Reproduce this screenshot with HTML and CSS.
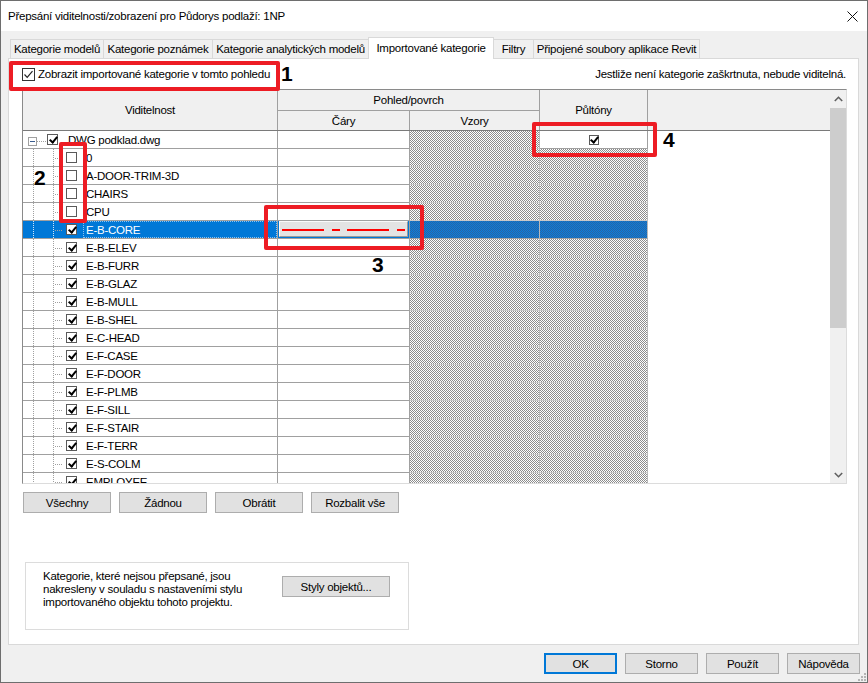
FILE: index.html
```html
<!DOCTYPE html>
<html lang="cs">
<head>
  <meta charset="UTF-8" />
  <title>Přepsání viditelnosti/zobrazení</title>
  <link rel="stylesheet" href="styles.css">
</head>
<body>

<div class="dialog">
  <div class="titlebar">
    <span class="title">Přepsání viditelnosti/zobrazení pro Půdorys podlaží: 1NP</span>
    <svg class="close" width="11" height="11" viewBox="0 0 11 11"><path d="M0.5 0.5L10.5 10.5M10.5 0.5L0.5 10.5" stroke="#111" stroke-width="1"/></svg>
  </div>

  <div class="main">
    <div class="tabs">
      <div class="tab t1">Kategorie modelů</div>
      <div class="tab t2">Kategorie poznámek</div>
      <div class="tab t3">Kategorie analytických modelů</div>
      <div class="tab t4 active">Importované kategorie</div>
      <div class="tab t5">Filtry</div>
      <div class="tab t6">Připojené soubory aplikace Revit</div>
    </div>

    <div class="panel">
      <div class="toprow">
        <label class="showcb">
          <span class="bigcb"><svg width="11" height="11" viewBox="0 0 11 11"><polyline points="1.5,5.5 4.2,8.3 9.5,2.2" fill="none" stroke="#222" stroke-width="1.2"/></svg></span>
          Zobrazit importované kategorie v tomto pohledu
        </label>
        <span class="hint">Jestliže není kategorie zaškrtnuta, nebude viditelná.</span>
      </div>

      <div class="grid">
        <div class="gridmain">
          <div class="ghead">
            <div class="hc c1">Viditelnost</div>
            <div class="hgroup">
              <div class="hgtitle">Pohled/povrch</div>
              <div class="hgsub">
                <div class="hc c2">Čáry</div>
                <div class="hc c3">Vzory</div>
              </div>
            </div>
            <div class="hc c4">Půltóny</div>
            <div class="hc c5"></div>
          </div>

          <div class="gbody">
            <div class="row root">
              <div class="cell c1"><span class="exp"></span><span class="hdots"></span><span class="cb on"></span><span class="lbl">DWG podklad.dwg</span></div>
              <div class="cell c2"></div>
              <div class="cell c3 hatch"></div>
              <div class="cell c4 center"><span class="cb small on"></span></div>
              <div class="cell c5"></div>
            </div>
            <div class="row">
              <div class="cell c1"><span class="g1"></span><span class="g2"></span><span class="g3"></span><span class="cb"></span><span class="lbl">0</span></div>
              <div class="cell c2"></div><div class="cell c3 hatch"></div><div class="cell c4 hatch"></div><div class="cell c5"></div>
            </div>
            <div class="row">
              <div class="cell c1"><span class="g1"></span><span class="g2"></span><span class="g3"></span><span class="cb"></span><span class="lbl">A-DOOR-TRIM-3D</span></div>
              <div class="cell c2"></div><div class="cell c3 hatch"></div><div class="cell c4 hatch"></div><div class="cell c5"></div>
            </div>
            <div class="row">
              <div class="cell c1"><span class="g1"></span><span class="g2"></span><span class="g3"></span><span class="cb"></span><span class="lbl">CHAIRS</span></div>
              <div class="cell c2"></div><div class="cell c3 hatch"></div><div class="cell c4 hatch"></div><div class="cell c5"></div>
            </div>
            <div class="row">
              <div class="cell c1"><span class="g1"></span><span class="g2"></span><span class="g3"></span><span class="cb"></span><span class="lbl">CPU</span></div>
              <div class="cell c2"></div><div class="cell c3 hatch"></div><div class="cell c4 hatch"></div><div class="cell c5"></div>
            </div>
            <div class="row sel">
              <div class="cell c1"><span class="g1"></span><span class="g2"></span><span class="g3"></span><span class="cb on"></span><span class="lbl">E-B-CORE</span></div>
              <div class="cell c2">
                <div class="linebtn"><svg width="125" height="2" viewBox="0 0 125 2"><line x1="0" y1="1" x2="125" y2="1" stroke="#ff0000" stroke-width="2" stroke-dasharray="42 8 8 7"/></svg></div>
              </div>
              <div class="cell c3 hatch"></div><div class="cell c4 hatch"></div><div class="cell c5"></div>
            </div>
            <div class="row">
              <div class="cell c1"><span class="g1"></span><span class="g2"></span><span class="g3"></span><span class="cb on"></span><span class="lbl">E-B-ELEV</span></div>
              <div class="cell c2"></div><div class="cell c3 hatch"></div><div class="cell c4 hatch"></div><div class="cell c5"></div>
            </div>
            <div class="row">
              <div class="cell c1"><span class="g1"></span><span class="g2"></span><span class="g3"></span><span class="cb on"></span><span class="lbl">E-B-FURR</span></div>
              <div class="cell c2"></div><div class="cell c3 hatch"></div><div class="cell c4 hatch"></div><div class="cell c5"></div>
            </div>
            <div class="row">
              <div class="cell c1"><span class="g1"></span><span class="g2"></span><span class="g3"></span><span class="cb on"></span><span class="lbl">E-B-GLAZ</span></div>
              <div class="cell c2"></div><div class="cell c3 hatch"></div><div class="cell c4 hatch"></div><div class="cell c5"></div>
            </div>
            <div class="row">
              <div class="cell c1"><span class="g1"></span><span class="g2"></span><span class="g3"></span><span class="cb on"></span><span class="lbl">E-B-MULL</span></div>
              <div class="cell c2"></div><div class="cell c3 hatch"></div><div class="cell c4 hatch"></div><div class="cell c5"></div>
            </div>
            <div class="row">
              <div class="cell c1"><span class="g1"></span><span class="g2"></span><span class="g3"></span><span class="cb on"></span><span class="lbl">E-B-SHEL</span></div>
              <div class="cell c2"></div><div class="cell c3 hatch"></div><div class="cell c4 hatch"></div><div class="cell c5"></div>
            </div>
            <div class="row">
              <div class="cell c1"><span class="g1"></span><span class="g2"></span><span class="g3"></span><span class="cb on"></span><span class="lbl">E-C-HEAD</span></div>
              <div class="cell c2"></div><div class="cell c3 hatch"></div><div class="cell c4 hatch"></div><div class="cell c5"></div>
            </div>
            <div class="row">
              <div class="cell c1"><span class="g1"></span><span class="g2"></span><span class="g3"></span><span class="cb on"></span><span class="lbl">E-F-CASE</span></div>
              <div class="cell c2"></div><div class="cell c3 hatch"></div><div class="cell c4 hatch"></div><div class="cell c5"></div>
            </div>
            <div class="row">
              <div class="cell c1"><span class="g1"></span><span class="g2"></span><span class="g3"></span><span class="cb on"></span><span class="lbl">E-F-DOOR</span></div>
              <div class="cell c2"></div><div class="cell c3 hatch"></div><div class="cell c4 hatch"></div><div class="cell c5"></div>
            </div>
            <div class="row">
              <div class="cell c1"><span class="g1"></span><span class="g2"></span><span class="g3"></span><span class="cb on"></span><span class="lbl">E-F-PLMB</span></div>
              <div class="cell c2"></div><div class="cell c3 hatch"></div><div class="cell c4 hatch"></div><div class="cell c5"></div>
            </div>
            <div class="row">
              <div class="cell c1"><span class="g1"></span><span class="g2"></span><span class="g3"></span><span class="cb on"></span><span class="lbl">E-F-SILL</span></div>
              <div class="cell c2"></div><div class="cell c3 hatch"></div><div class="cell c4 hatch"></div><div class="cell c5"></div>
            </div>
            <div class="row">
              <div class="cell c1"><span class="g1"></span><span class="g2"></span><span class="g3"></span><span class="cb on"></span><span class="lbl">E-F-STAIR</span></div>
              <div class="cell c2"></div><div class="cell c3 hatch"></div><div class="cell c4 hatch"></div><div class="cell c5"></div>
            </div>
            <div class="row">
              <div class="cell c1"><span class="g1"></span><span class="g2"></span><span class="g3"></span><span class="cb on"></span><span class="lbl">E-F-TERR</span></div>
              <div class="cell c2"></div><div class="cell c3 hatch"></div><div class="cell c4 hatch"></div><div class="cell c5"></div>
            </div>
            <div class="row">
              <div class="cell c1"><span class="g1"></span><span class="g2"></span><span class="g3"></span><span class="cb on"></span><span class="lbl">E-S-COLM</span></div>
              <div class="cell c2"></div><div class="cell c3 hatch"></div><div class="cell c4 hatch"></div><div class="cell c5"></div>
            </div>
            <div class="row">
              <div class="cell c1"><span class="g1"></span><span class="g2"></span><span class="g3"></span><span class="cb on"></span><span class="lbl">EMPLOYEE</span></div>
              <div class="cell c2"></div><div class="cell c3 hatch"></div><div class="cell c4 hatch"></div><div class="cell c5"></div>
            </div>
          </div>
        </div>

        <!-- svislý posuvník -->
        <div class="vscroll">
          <div class="sbtn"><svg width="9" height="6" viewBox="0 0 9 6"><polyline points="0.8,5 4.5,1.3 8.2,5" fill="none" stroke="#606060" stroke-width="1.6"/></svg></div>
          <div class="thumb"></div>
          <div class="track"></div>
          <div class="sbtn"><svg width="9" height="6" viewBox="0 0 9 6"><polyline points="0.8,1 4.5,4.7 8.2,1" fill="none" stroke="#606060" stroke-width="1.6"/></svg></div>
        </div>
      </div>

      <div class="btnrow">
        <button class="btn wide">Všechny</button>
        <button class="btn wide">Žádnou</button>
        <button class="btn wide">Obrátit</button>
        <button class="btn wide">Rozbalit vše</button>
      </div>

      <div class="info">
        <div class="infotext">Kategorie, které nejsou přepsané, jsou<br>nakresleny v souladu s nastaveními stylu<br>importovaného objektu tohoto projektu.</div>
        <button class="btn styles">Styly objektů...</button>
      </div>
    </div>

    <div class="footer">
      <button class="btn foot ok">OK</button>
      <button class="btn foot">Storno</button>
      <button class="btn foot">Použít</button>
      <button class="btn foot">Nápověda</button>
    </div>
  </div>

  <!-- úchyt pro změnu velikosti -->
  <svg class="grip" width="10" height="10" viewBox="0 0 10 10">
    <rect x="7" y="1" width="2" height="2" fill="#b4b4b4"/>
    <rect x="4" y="4" width="2" height="2" fill="#b4b4b4"/>
    <rect x="7" y="4" width="2" height="2" fill="#b4b4b4"/>
    <rect x="1" y="7" width="2" height="2" fill="#b4b4b4"/>
    <rect x="4" y="7" width="2" height="2" fill="#b4b4b4"/>
    <rect x="7" y="7" width="2" height="2" fill="#b4b4b4"/>
  </svg>

  <!-- anotace -->
  <div class="mark m1"></div>
  <div class="mark m2"></div>
  <div class="mark m3"></div>
  <div class="mark m4"></div>
  <span class="num n1">1</span>
  <span class="num n2">2</span>
  <span class="num n3">3</span>
  <span class="num n4">4</span>
</div>

</body>
</html>
```

FILE: styles.css
```css
* { box-sizing: border-box; }

body {
  margin: 0;
  background: #fff;
  font-family: "Liberation Sans", Arial, sans-serif;
  font-size: 11.5px;
  letter-spacing: -0.25px;
  color: #000;
}

.dialog {
  position: relative;
  width: 868px;
  height: 683px;
  border: 1px solid #6e6e6e;
  background: #f0f0f0;
  display: flex;
  flex-direction: column;
  overflow: hidden;
}

.titlebar {
  height: 30px;
  flex: none;
  background: #fff;
  display: flex;
  align-items: center;
  justify-content: space-between;
  padding: 0 9px 0 7px;
}

.main {
  flex: 1;
  padding: 6px 8px 0 7px;
}

/* záložky */
.tabs {
  height: 22px;
  display: flex;
  align-items: flex-end;
  margin: 0 0 -1px 2px;
  position: relative;
  z-index: 1;
}

.tab {
  height: 20px;
  border: 1px solid #d9d9d9;
  background: #f0f0f0;
  display: flex;
  align-items: center;
  justify-content: center;
  white-space: nowrap;
  margin-left: -1px;
}

.tab.t1 { width: 94px; margin-left: 0; }
.tab.t2 { width: 110px; }
.tab.t3 { width: 157px; }
.tab.t4 { width: 126px; }
.tab.t5 { width: 41px; }
.tab.t6 { width: 167px; }

.tab.active {
  height: 22px;
  background: #fff;
  border-bottom: none;
  position: relative;
  z-index: 2;
  padding-bottom: 2px;
}

.panel {
  height: 587px;
  background: #fff;
  border: 1px solid #d9d9d9;
  padding: 0 11px 0 13px;
}

.toprow {
  height: 30px;
  display: flex;
  align-items: center;
  justify-content: space-between;
  padding-right: 1px;
}

.showcb {
  display: flex;
  align-items: center;
  gap: 3px;
}

.bigcb {
  width: 13px;
  height: 13px;
  border: 1px solid #333;
  background: #fff;
  display: flex;
  align-items: center;
  justify-content: center;
}

/* mřížka */
.grid {
  height: 395px;
  border: 1px solid;
  border-color: #8a8a8a #dcdcdc #dcdcdc #8a8a8a;
  display: flex;
}

.gridmain {
  width: 807px;
  display: flex;
  flex-direction: column;
}

.ghead {
  height: 41px;
  flex: none;
  display: flex;
  background: #f0f0f0;
  border-bottom: 1px solid #7a7a7a;
}

.hc {
  display: flex;
  align-items: center;
  justify-content: center;
  border-right: 1px solid #a0a0a0;
}

.c1 { width: 255px; }
.c2 { width: 132px; }
.c3 { width: 130px; }
.c4 { width: 108px; }
.c5 { flex: 1; border-right: none; }

.hgroup {
  width: 262px;
  display: flex;
  flex-direction: column;
}

.hgtitle {
  height: 21px;
  display: flex;
  align-items: center;
  justify-content: center;
  border-bottom: 1px solid #a0a0a0;
  border-right: 1px solid #a0a0a0;
}

.hgsub {
  flex: 1;
  display: flex;
}

.gbody {
  flex: 1;
  overflow: hidden;
  background: #fff;
}

.row {
  height: 18px;
  display: flex;
}

.cell {
  border-bottom: 1px solid #a0a0a0;
  border-right: 1px solid #a0a0a0;
  display: flex;
  align-items: center;
}

.cell.c5 { border: none; }
.cell.center { justify-content: center; }

.hatch {
  background-image: repeating-conic-gradient(#8c8c8c 0 25%, #fff 0 50%);
  background-size: 2px 2px;
  border-bottom-color: #c8c8c8;
  border-right-color: #b8b8b8;
}

.cell.c1 { align-items: stretch; }

.root .c1 { padding-left: 5px; }

.exp {
  width: 9px;
  height: 9px;
  align-self: center;
  margin-top: 4px;
  border: 1px solid #a0a0a0;
  background: linear-gradient(#3a5d8f, #3a5d8f) center / 5px 1px no-repeat, #fff;
}

.hdots {
  width: 9px;
  background: repeating-linear-gradient(90deg, #a0a0a0 0 1px, transparent 1px 2px) 0 10px / 100% 1px no-repeat;
}

.g1 { width: 10px; }
.g2 { width: 20px; border-left: 1px dotted #a0a0a0; }
.g3 {
  width: 10px;
  border-left: 1px dotted #a0a0a0;
  background: repeating-linear-gradient(90deg, #a0a0a0 0 1px, transparent 1px 2px) 1px 9px / 100% 1px no-repeat;
}

.cb {
  position: relative;
  flex: none;
  align-self: center;
  width: 11px;
  height: 11px;
  margin-left: 3px;
  border: 1px solid #5a5a5a;
  background: #fff;
}

.root .cb { margin-left: 1px; margin-top: -1px; }

.cb.on::after {
  content: "";
  position: absolute;
  left: 3px;
  top: 0;
  width: 3px;
  height: 6px;
  border: solid #000;
  border-width: 0 2px 2px 0;
  transform: rotate(40deg);
}

.cb.small { width: 10px; height: 10px; margin: 0; }
.cb.small::after { left: 2px; top: -1px; }

.lbl {
  flex: 1;
  display: flex;
  align-items: center;
  margin-left: 6px;
  padding-left: 3px;
  white-space: nowrap;
}

.root .lbl { margin-left: 7px; }

/* vybraný řádek */
.sel .c1,
.sel .c2 { background: #0078d7; }
.sel .lbl { color: #fff; outline: 1px dotted #8fc3ee; outline-offset: -1px; }
.sel .g2, .sel .g3 { border-left-color: #cfe4f7; }
.sel .hatch {
  background-image: repeating-conic-gradient(#2a64a0 0 25%, #0a7ede 0 50%);
  border-bottom-color: #a0a0a0;
}
.sel .c2 { padding: 0 1px; align-items: flex-start; }

.linebtn {
  width: 129px;
  height: 16px;
  border: 1px solid;
  border-color: #fafafa #9a9a9a #9a9a9a #fafafa;
  background: #e3e3e3;
  display: flex;
  align-items: flex-start;
  padding: 7px 0 0 2px;
}

.linebtn svg { display: block; }

/* posuvník */
.vscroll {
  width: 16px;
  display: flex;
  flex-direction: column;
  background: #f0f0f0;
}

.sbtn {
  height: 17px;
  flex: none;
  display: flex;
  align-items: center;
  justify-content: center;
}

.thumb {
  height: 220px;
  margin-top: 1px;
  background: #cdcdcd;
}

.track { flex: 1; }

/* tlačítka */
.btn {
  font-family: inherit;
  font-size: 11.5px;
  letter-spacing: -0.25px;
  color: #000;
  height: 21px;
  padding: 0;
  background: #e1e1e1;
  border: 1px solid #adadad;
}

.btnrow {
  display: flex;
  gap: 8px;
  margin: 8px 0 0 1px;
}

.btn.wide { width: 88px; }

.info {
  width: 384px;
  height: 68px;
  margin: 49px 0 0 3px;
  border: 1px solid #dcdcdc;
  display: flex;
  align-items: flex-start;
  padding: 7px 0 0 17px;
}

.infotext {
  width: 239px;
  line-height: 13px;
}

.btn.styles {
  width: 108px;
  margin-top: 6px;
}

.footer {
  display: flex;
  justify-content: flex-end;
  gap: 8px;
  margin: 8px -1px 0 0;
}

.btn.foot { width: 73px; }
.btn.ok { border: 2px solid #0078d7; }

.grip {
  position: absolute;
  right: 0;
  bottom: 0;
}

/* červené anotace */
.mark {
  position: absolute;
  border: 4px solid #ed1c24;
  border-radius: 2px;
}

.m1 { left: 8px; top: 60px; width: 271px; height: 30px; }
.m2 { left: 58px; top: 141px; width: 28px; height: 81px; }
.m3 { left: 263px; top: 204px; width: 160px; height: 45px; }
.m4 { left: 531px; top: 121px; width: 125px; height: 35px; }

.num {
  position: absolute;
  font-family: "Liberation Sans", Arial, sans-serif;
  font-size: 21px;
  line-height: 21px;
  letter-spacing: 0;
  font-weight: bold;
  color: #000;
}

.n1 { left: 280px; top: 62px; }
.n2 { left: 33px; top: 166px; }
.n3 { left: 371px; top: 253px; }
.n4 { left: 662px; top: 128px; }
```
